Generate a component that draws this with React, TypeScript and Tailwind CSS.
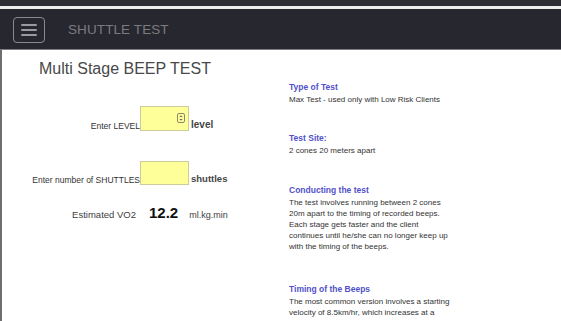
import React from "react";

const font = { fontFamily: '"Liberation Sans", Arial, sans-serif' };

function Section({
  title,
  lines,
  mb,
}: {
  title: string;
  lines: string[];
  mb: string;
}) {
  return (
    <div className={mb}>
      <div className="text-[8.5px] leading-[14px] font-bold text-[#5151c9] whitespace-nowrap">
        {title}
      </div>
      <div className="text-[8px] leading-[11px] text-[#333333]">
        {lines.map((l, i) => (
          <div key={i} className="whitespace-nowrap">
            {l}
          </div>
        ))}
      </div>
    </div>
  );
}

export default function App() {
  return (
    <div
      className="w-[561px] h-[321px] overflow-hidden bg-white flex flex-col"
      style={font}
    >
      <div className="h-[6px] bg-[#2c2d34] shrink-0" />
      <div className="h-[3px] bg-[#ececec] shrink-0" />
      <div className="h-[41px] bg-[#27282f] shrink-0 flex items-start pt-[8px] pl-[13px] border-b border-[#7d7d7d]">
        <div className="w-[32px] h-[26px] rounded-[4px] border border-[#8a8a8e] flex flex-col items-center justify-center gap-[3px]">
          <div className="w-[16px] h-[2px] bg-[#9a9aa0] rounded-full" />
          <div className="w-[16px] h-[2px] bg-[#9a9aa0] rounded-full" />
          <div className="w-[16px] h-[2px] bg-[#9a9aa0] rounded-full" />
        </div>
        <div className="ml-[23px] mt-[5px] text-[13.5px] leading-[16px] text-[#7b7b82] tracking-[0.1px]">
          SHUTTLE TEST
        </div>
      </div>
      <div className="flex-1 flex border-l-2 border-[#6e6e6e]">
        <div className="w-[287px] shrink-0">
          <div className="mt-[10px] pl-[37px] text-[16px] leading-[18px] text-[#484848]">
            Multi Stage BEEP TEST
          </div>
          <div className="mt-[28px] flex items-end">
            <div className="w-[138px] text-right text-[8.5px] leading-[10px] text-[#333333]">
              Enter LEVEL
            </div>
            <div className="relative w-[49px] h-[25px] bg-[#ffff99] border border-[#cdcd9c]">
              <svg
                className="absolute right-[3px] top-[6px]"
                width="8"
                height="10"
                viewBox="0 0 8 10"
              >
                <rect
                  x="0.5"
                  y="0.5"
                  width="7"
                  height="9"
                  rx="1.5"
                  fill="none"
                  stroke="#8a8a6a"
                  strokeWidth="1"
                />
                <path d="M4 2.2 L5.6 4 L2.4 4 Z" fill="#6a6a5a" />
                <path d="M4 7.8 L5.6 6 L2.4 6 Z" fill="#6a6a5a" />
              </svg>
            </div>
            <div className="ml-[2px] text-[10px] leading-[12px] font-bold text-[#454545]">
              level
            </div>
          </div>
          <div className="mt-[30px] flex items-end">
            <div className="w-[138px] text-right text-[8.5px] leading-[10px] text-[#333333] whitespace-nowrap">
              Enter number of SHUTTLES
            </div>
            <div className="w-[49px] h-[24px] bg-[#ffff99] border border-[#cdcd9c]" />
            <div className="ml-[2px] text-[9.5px] leading-[12px] font-bold text-[#454545]">
              shuttles
            </div>
          </div>
          <div className="mt-[19px] flex items-baseline">
            <div className="w-[134px] text-right text-[9.5px] leading-[12px] text-[#404040] whitespace-nowrap">
              Estimated VO2
            </div>
            <div className="ml-[13px] text-[15px] leading-[17px] font-bold text-[#111111]">
              12.2
            </div>
            <div className="ml-[11px] text-[9px] leading-[12px] text-[#404040]">
              ml.kg.min
            </div>
          </div>
        </div>
        <div className="pt-[30px] w-[180px]">
          <Section
            title="Type of Test"
            lines={["Max Test - used only with Low Risk Clients"]}
            mb="mb-[26px]"
          />
          <Section
            title="Test Site:"
            lines={["2 cones 20 meters apart"]}
            mb="mb-[27px]"
          />
          <Section
            title="Conducting the test"
            lines={[
              "The test involves running between 2 cones",
              "20m apart to the timing of recorded beeps.",
              "Each stage gets faster and the client",
              "continues until he/she can no longer keep up",
              "with the timing of the beeps.",
            ]}
            mb="mb-[30px]"
          />
          <Section
            title="Timing of the Beeps"
            lines={[
              "The most common version involves a starting",
              "velocity of 8.5km/hr, which increases at a",
              "rate of 0.5 km/hr each minute.",
            ]}
            mb="mb-0"
          />
        </div>
      </div>
    </div>
  );
}
